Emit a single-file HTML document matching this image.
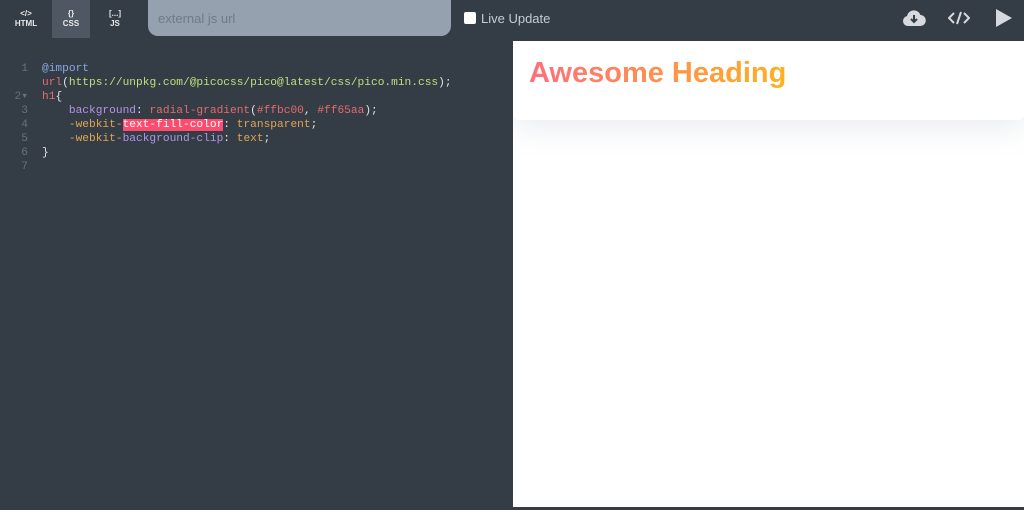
<!DOCTYPE html><html><head><style>
*{margin:0;padding:0;box-sizing:border-box}
body{width:1024px;height:510px;background:#343d46;overflow:hidden;font-family:"Liberation Sans",sans-serif;position:relative}
.top{position:absolute;left:0;top:0;width:1024px;height:40px;background:#343d46}
.tab{position:absolute;top:0;width:34px;height:38px;color:#e8e8e8;font-size:8px;font-weight:bold;text-align:center;line-height:10px;padding-top:9px}
.inp{position:absolute;left:148px;top:0;width:303px;height:36px;background:#95a1ae;border-radius:0 0 10px 10px;color:#6f7b88;font-size:13px;padding:11px 10px}
.cb{position:absolute;left:464px;top:12px;width:12px;height:12px;background:#fff;border-radius:2px}
.lu{position:absolute;left:481px;top:11px;color:#c5cbd2;font-size:13px}
pre{position:absolute;top:62px;font-family:"Liberation Mono",monospace;font-size:11.2px;line-height:14px}
.ln{left:0;width:28px;text-align:right;color:#65717d}
.code{left:42px;color:#dfe3e7}
.k{color:#8aa8e6}.r{color:#e96a6a}.g{color:#bde07c}.p{color:#b294e8}.o{color:#e2a452}.hl{background:#ff4b6e;color:#fff}
.pv{position:absolute;left:513px;top:41px;width:511px;height:466px;background:#fff;overflow:hidden}
.card{position:absolute;left:0;top:0;width:511px;height:79px;background:#fff;border-radius:0 0 6px 6px;box-shadow:0 8px 30px rgba(140,150,170,.18)}
h1{position:absolute;left:16px;top:16px;font-size:29px;font-weight:bold;background:linear-gradient(90deg,#ff6f7d,#ffb020);-webkit-background-clip:text;-webkit-text-fill-color:transparent}
</style></head><body>
<div class="top">
<div class="tab" style="left:9px">&lt;/&gt;<br>HTML</div>
<div class="tab" style="left:52px;width:38px;background:#4e5762">{}<br>CSS</div>
<div class="tab" style="left:98px">[...]<br>JS</div>
<div class="inp">external js url</div>
<div class="cb"></div><div class="lu">Live Update</div>
<svg style="position:absolute;left:902px;top:8px" width="24" height="20" viewBox="0 0 24 20"><path d="M6 18a5 5 0 0 1-1-9.9A7 7 0 0 1 18.5 7 5.5 5.5 0 0 1 18 18z" fill="#d6d9dd"/><path d="M12 7v7M9 11l3 3 3-3" stroke="#343d46" stroke-width="2" fill="none"/></svg>
<svg style="position:absolute;left:948px;top:11px" width="22" height="14" viewBox="0 0 22 14"><path d="M6 2L1 7l5 5M16 2l5 5-5 5M13 1L9 13" stroke="#d6d9dd" stroke-width="2" fill="none"/></svg>
<svg style="position:absolute;left:995px;top:8px" width="18" height="20"><path d="M1 1L17 10 1 19z" fill="#d6d9dd"/></svg>
</div>
<pre class="ln">1

2▾
3
4
5
6
7</pre>
<pre class="code"><span class="k">@import</span>
<span class="r">url</span>(<span class="g">https://unpkg.com/@picocss/pico@latest/css/pico.min.css</span>);
<span class="r">h1</span>{
    <span class="p">background</span>: <span class="r">radial-gradient</span>(<span class="r">#ffbc00</span>, <span class="r">#ff65aa</span>);
    <span class="o">-webkit-</span><span class="hl">text-fill-color</span>: <span class="o">transparent</span>;
    <span class="o">-webkit-</span><span class="p">background-clip</span>: <span class="o">text</span>;
}</pre>
<div class="pv"><div class="card"><h1>Awesome Heading</h1></div></div>
</body></html>
